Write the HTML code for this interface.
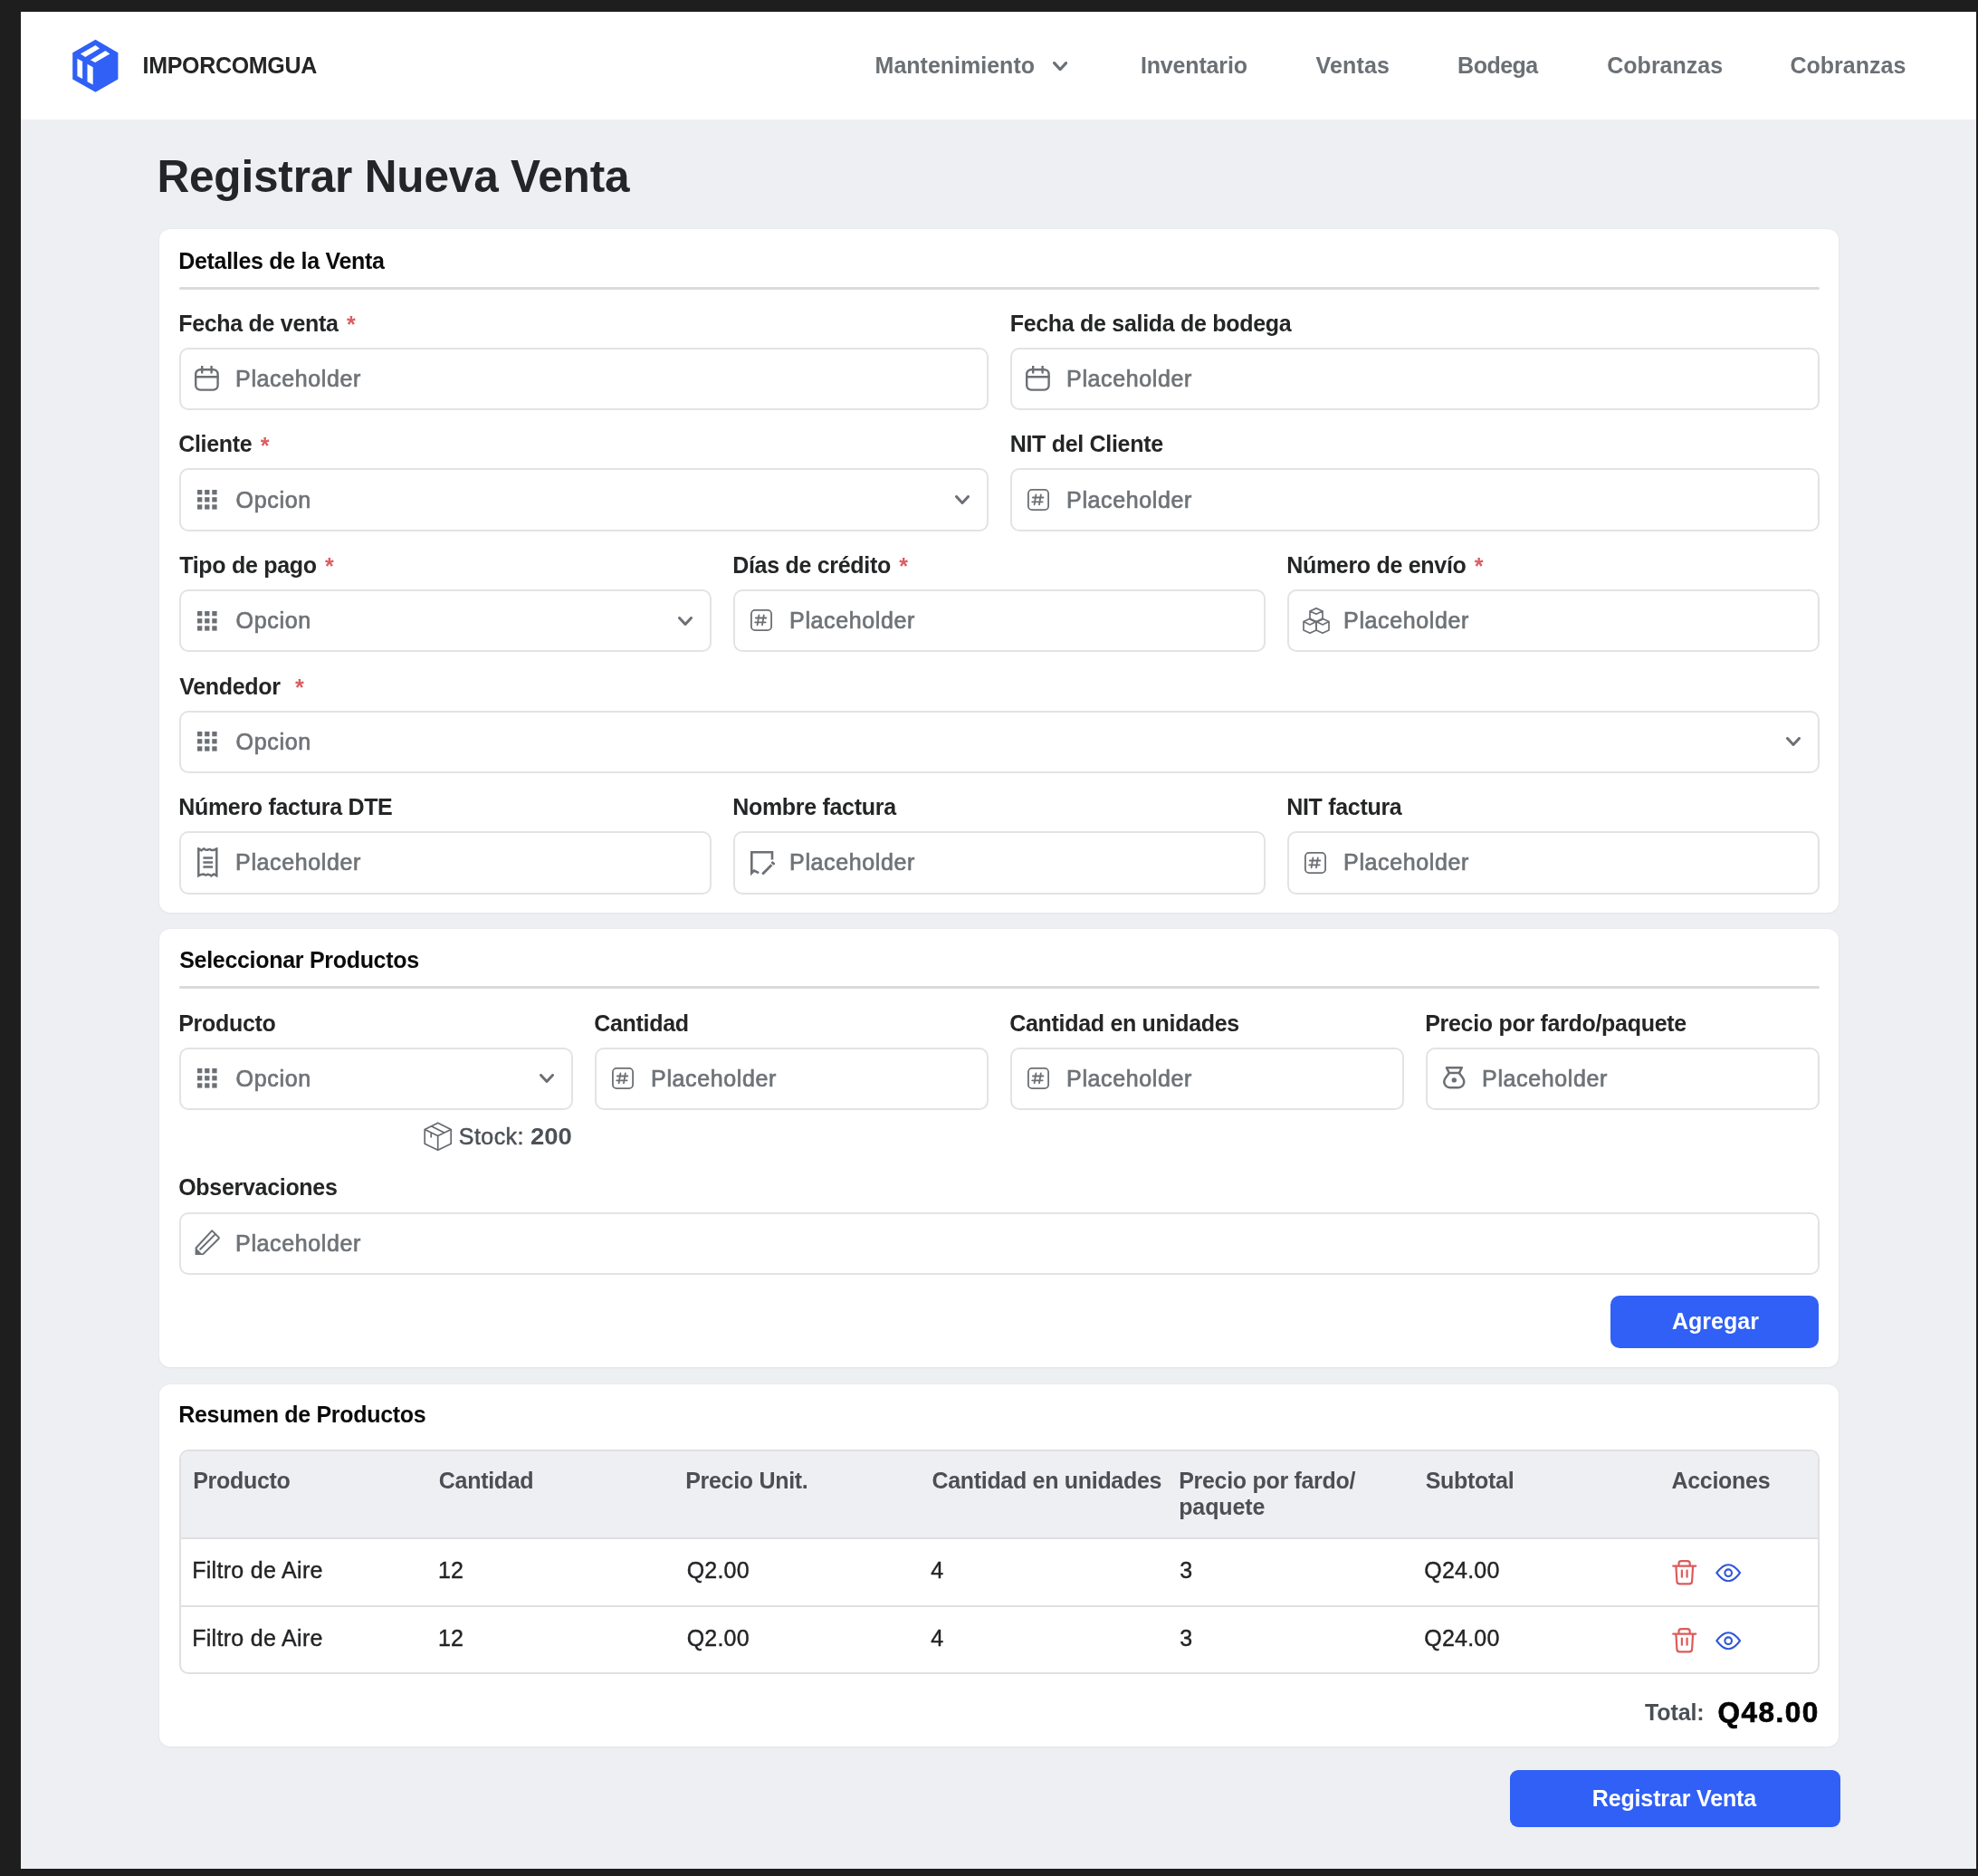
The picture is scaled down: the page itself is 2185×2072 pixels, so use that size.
<!DOCTYPE html>
<html><head><meta charset="utf-8"><title>Registrar Nueva Venta</title>
<style>html,body{margin:0;padding:0;} body{width:2185px;height:2072px;background:#1e1e1f;position:relative;overflow:hidden;font-family:'Liberation Sans', sans-serif;}</style>
</head><body><div style="position:absolute;left:0;top:0;width:2185px;height:2072px;will-change:transform">
<div style="position:absolute;left:23px;top:13px;width:2160px;height:2051px;background:#eeeff2"></div>
<div style="position:absolute;left:23px;top:13px;width:2160px;height:119px;background:#fff"></div>
<svg style="position:absolute;left:79px;top:43px" width="52" height="60" viewBox="0 0 52 60" fill="none"><path fill="#3060f5" d="M26.5 0.8 L51.4 15.3 L51.4 44.5 L26.5 58.8 L1.2 44.5 L1.2 15.3 Z"/>
<path fill="#fff" d="M9.9 16.6 L26.5 7.0 L31.0 10.5 L15.2 19.9 Z"/>
<path fill="#fff" d="M20.9 23.2 L37.4 13.1 L42.4 16.4 L26.1 26.1 Z"/>
<path fill="#fff" d="M6.4 21.8 L12.1 24.7 L12.1 44.1 L6.4 41.0 Z"/>
<path fill="#fff" d="M17.5 27.8 L23.7 31.3 L23.7 50.5 L17.5 47.2 Z"/></svg>
<div style="position:absolute;left:157.50px;top:59.74px;font:700 25px/25px 'Liberation Sans', sans-serif;color:#242526;white-space:nowrap;letter-spacing:-0.3px;">IMPORCOMGUA</div>
<div style="position:absolute;left:966.60px;top:59.84px;font:700 25px/25px 'Liberation Sans', sans-serif;color:#6b7075;white-space:nowrap;">Mantenimiento</div>
<svg style="position:absolute;left:1163.2px;top:67.8px" width="16.2" height="10.4" viewBox="0 0 16.2 10.4" fill="none"><path d="M1.6 1.6 L8.1 8.8 L14.6 1.6" stroke="#6b7075" stroke-width="3.2" stroke-linecap="round" stroke-linejoin="round"/></svg>
<div style="position:absolute;left:1259.90px;top:59.84px;font:700 25px/25px 'Liberation Sans', sans-serif;color:#6b7075;white-space:nowrap;letter-spacing:-0.15px;">Inventario</div>
<div style="position:absolute;left:1453.50px;top:59.84px;font:700 25px/25px 'Liberation Sans', sans-serif;color:#6b7075;white-space:nowrap;letter-spacing:0.15px;">Ventas</div>
<div style="position:absolute;left:1610.10px;top:59.84px;font:700 25px/25px 'Liberation Sans', sans-serif;color:#6b7075;white-space:nowrap;letter-spacing:-0.5px;">Bodega</div>
<div style="position:absolute;left:1775.30px;top:59.84px;font:700 25px/25px 'Liberation Sans', sans-serif;color:#6b7075;white-space:nowrap;">Cobranzas</div>
<div style="position:absolute;left:1977.50px;top:59.84px;font:700 25px/25px 'Liberation Sans', sans-serif;color:#6b7075;white-space:nowrap;">Cobranzas</div>
<div style="position:absolute;left:173.40px;top:169.90px;font:700 49.5px/49.5px 'Liberation Sans', sans-serif;color:#242526;white-space:nowrap;letter-spacing:-0.17px;">Registrar Nueva Venta</div>
<div style="position:absolute;left:176px;top:253.3px;width:1854.5px;height:754.5px;background:#fff;border-radius:12px;box-shadow:0 0 2px rgba(0,0,0,0.05),0 1px 3px rgba(0,0,0,0.04)"></div>
<div style="position:absolute;left:197.20px;top:275.94px;font:700 25px/25px 'Liberation Sans', sans-serif;color:#0b0b0b;white-space:nowrap;letter-spacing:-0.3px;">Detalles de la Venta</div>
<div style="position:absolute;left:197.5px;top:316.6px;width:1812px;height:3px;background:#dadadd;border-radius:1.5px"></div>
<div style="position:absolute;left:197.20px;top:344.74px;font:700 25px/25px 'Liberation Sans', sans-serif;color:#242526;white-space:nowrap;letter-spacing:-0.3px;">Fecha de venta<span style="color:#dc5d62;position:relative;top:1.5px;margin-left:9.3px">*</span></div>
<div style="position:absolute;left:1115.70px;top:344.74px;font:700 25px/25px 'Liberation Sans', sans-serif;color:#242526;white-space:nowrap;letter-spacing:-0.3px;">Fecha de salida de bodega</div>
<div style="position:absolute;left:197.5px;top:383.7px;width:894.0px;height:69.6px;box-sizing:border-box;border:2px solid #e3e3e6;border-radius:10px;background:#fff"></div>
<svg style="position:absolute;left:215.1px;top:403.7px" width="27" height="28" viewBox="0 0 27 28" fill="none"><rect x="1.2" y="4.2" width="24.4" height="22.4" rx="5" stroke="#6c7075" stroke-width="2.4"/>
<path d="M1.2 12.2 H25.6 M8.2 0.6 V7.6 M18.6 0.6 V7.6" stroke="#6c7075" stroke-width="2.4" stroke-linecap="round"/></svg>
<div style="position:absolute;left:260.10px;top:405.94px;font:400 25px/25px 'Liberation Sans', sans-serif;color:#6f7377;white-space:nowrap;letter-spacing:0.62px;-webkit-text-stroke:0.7px #6f7377;">Placeholder</div>
<div style="position:absolute;left:1115.5px;top:383.7px;width:894.0px;height:69.6px;box-sizing:border-box;border:2px solid #e3e3e6;border-radius:10px;background:#fff"></div>
<svg style="position:absolute;left:1133.1px;top:403.7px" width="27" height="28" viewBox="0 0 27 28" fill="none"><rect x="1.2" y="4.2" width="24.4" height="22.4" rx="5" stroke="#6c7075" stroke-width="2.4"/>
<path d="M1.2 12.2 H25.6 M8.2 0.6 V7.6 M18.6 0.6 V7.6" stroke="#6c7075" stroke-width="2.4" stroke-linecap="round"/></svg>
<div style="position:absolute;left:1178.10px;top:405.94px;font:400 25px/25px 'Liberation Sans', sans-serif;color:#6f7377;white-space:nowrap;letter-spacing:0.62px;-webkit-text-stroke:0.7px #6f7377;">Placeholder</div>
<div style="position:absolute;left:197.20px;top:478.34px;font:700 25px/25px 'Liberation Sans', sans-serif;color:#242526;white-space:nowrap;letter-spacing:-0.3px;">Cliente<span style="color:#dc5d62;position:relative;top:1.5px;margin-left:9.3px">*</span></div>
<div style="position:absolute;left:1115.70px;top:478.34px;font:700 25px/25px 'Liberation Sans', sans-serif;color:#242526;white-space:nowrap;letter-spacing:-0.3px;">NIT del Cliente</div>
<div style="position:absolute;left:197.5px;top:517.3px;width:894.0px;height:69.6px;box-sizing:border-box;border:2px solid #e3e3e6;border-radius:10px;background:#fff"></div>
<svg style="position:absolute;left:218.1px;top:541.0999999999999px" width="22" height="22" viewBox="0 0 22 22" fill="none"><rect x="0.0" y="0.0" width="5.3" height="5.3" fill="#6c7075"/><rect x="0.0" y="8.15" width="5.3" height="5.3" fill="#6c7075"/><rect x="0.0" y="16.3" width="5.3" height="5.3" fill="#6c7075"/><rect x="8.15" y="0.0" width="5.3" height="5.3" fill="#6c7075"/><rect x="8.15" y="8.15" width="5.3" height="5.3" fill="#6c7075"/><rect x="8.15" y="16.3" width="5.3" height="5.3" fill="#6c7075"/><rect x="16.3" y="0.0" width="5.3" height="5.3" fill="#6c7075"/><rect x="16.3" y="8.15" width="5.3" height="5.3" fill="#6c7075"/><rect x="16.3" y="16.3" width="5.3" height="5.3" fill="#6c7075"/></svg>
<div style="position:absolute;left:260.50px;top:539.54px;font:400 25px/25px 'Liberation Sans', sans-serif;color:#6f7377;white-space:nowrap;letter-spacing:0.7px;-webkit-text-stroke:0.7px #6f7377;">Opcion</div>
<svg style="position:absolute;left:1054.6px;top:547.0999999999999px" width="16" height="10" viewBox="0 0 16 10" fill="none"><path d="M1.5 1.5 L8.0 8.5 L14.5 1.5" stroke="#6c7075" stroke-width="3" stroke-linecap="round" stroke-linejoin="round"/></svg>
<div style="position:absolute;left:1115.5px;top:517.3px;width:894.0px;height:69.6px;box-sizing:border-box;border:2px solid #e3e3e6;border-radius:10px;background:#fff"></div>
<svg style="position:absolute;left:1135.2px;top:539.8px" width="24" height="24" viewBox="0 0 24 24" fill="none"><rect x="0.9" y="0.9" width="22.2" height="22.2" rx="4.2" stroke="#6c7075" stroke-width="1.8"/>
<path d="M9.4 6.4 L7.6 17.4 M14.8 6.4 L13 17.4 M5.9 9.5 H17.4 M5.2 14.3 H16.7" stroke="#6c7075" stroke-width="1.8" stroke-linecap="round"/></svg>
<div style="position:absolute;left:1178.10px;top:539.54px;font:400 25px/25px 'Liberation Sans', sans-serif;color:#6f7377;white-space:nowrap;letter-spacing:0.62px;-webkit-text-stroke:0.7px #6f7377;">Placeholder</div>
<div style="position:absolute;left:198.20px;top:611.94px;font:700 25px/25px 'Liberation Sans', sans-serif;color:#242526;white-space:nowrap;letter-spacing:-0.3px;">Tipo de pago<span style="color:#dc5d62;position:relative;top:1.5px;margin-left:9.3px">*</span></div>
<div style="position:absolute;left:809.20px;top:611.94px;font:700 25px/25px 'Liberation Sans', sans-serif;color:#242526;white-space:nowrap;letter-spacing:-0.3px;">Días de crédito<span style="color:#dc5d62;position:relative;top:1.5px;margin-left:9.3px">*</span></div>
<div style="position:absolute;left:1421.20px;top:611.94px;font:700 25px/25px 'Liberation Sans', sans-serif;color:#242526;white-space:nowrap;letter-spacing:-0.3px;">Número de envío<span style="color:#dc5d62;position:relative;top:1.5px;margin-left:9.3px">*</span></div>
<div style="position:absolute;left:197.5px;top:650.9px;width:588.0px;height:69.6px;box-sizing:border-box;border:2px solid #e3e3e6;border-radius:10px;background:#fff"></div>
<svg style="position:absolute;left:218.1px;top:674.6999999999999px" width="22" height="22" viewBox="0 0 22 22" fill="none"><rect x="0.0" y="0.0" width="5.3" height="5.3" fill="#6c7075"/><rect x="0.0" y="8.15" width="5.3" height="5.3" fill="#6c7075"/><rect x="0.0" y="16.3" width="5.3" height="5.3" fill="#6c7075"/><rect x="8.15" y="0.0" width="5.3" height="5.3" fill="#6c7075"/><rect x="8.15" y="8.15" width="5.3" height="5.3" fill="#6c7075"/><rect x="8.15" y="16.3" width="5.3" height="5.3" fill="#6c7075"/><rect x="16.3" y="0.0" width="5.3" height="5.3" fill="#6c7075"/><rect x="16.3" y="8.15" width="5.3" height="5.3" fill="#6c7075"/><rect x="16.3" y="16.3" width="5.3" height="5.3" fill="#6c7075"/></svg>
<div style="position:absolute;left:260.50px;top:673.14px;font:400 25px/25px 'Liberation Sans', sans-serif;color:#6f7377;white-space:nowrap;letter-spacing:0.7px;-webkit-text-stroke:0.7px #6f7377;">Opcion</div>
<svg style="position:absolute;left:748.6px;top:680.6999999999999px" width="16" height="10" viewBox="0 0 16 10" fill="none"><path d="M1.5 1.5 L8.0 8.5 L14.5 1.5" stroke="#6c7075" stroke-width="3" stroke-linecap="round" stroke-linejoin="round"/></svg>
<div style="position:absolute;left:809.5px;top:650.9px;width:588.0px;height:69.6px;box-sizing:border-box;border:2px solid #e3e3e6;border-radius:10px;background:#fff"></div>
<svg style="position:absolute;left:829.2px;top:673.4px" width="24" height="24" viewBox="0 0 24 24" fill="none"><rect x="0.9" y="0.9" width="22.2" height="22.2" rx="4.2" stroke="#6c7075" stroke-width="1.8"/>
<path d="M9.4 6.4 L7.6 17.4 M14.8 6.4 L13 17.4 M5.9 9.5 H17.4 M5.2 14.3 H16.7" stroke="#6c7075" stroke-width="1.8" stroke-linecap="round"/></svg>
<div style="position:absolute;left:872.10px;top:673.14px;font:400 25px/25px 'Liberation Sans', sans-serif;color:#6f7377;white-space:nowrap;letter-spacing:0.62px;-webkit-text-stroke:0.7px #6f7377;">Placeholder</div>
<div style="position:absolute;left:1421.5px;top:650.9px;width:588.0px;height:69.6px;box-sizing:border-box;border:2px solid #e3e3e6;border-radius:10px;background:#fff"></div>
<svg style="position:absolute;left:1438.6px;top:671.0px" width="30" height="29" viewBox="0 0 30 29" fill="none"><path d="M15 0.9 L22 4 V13 L15 16.3 L8 13 V4 Z M8 4 L15 7.3 L22 4" stroke="#6c7075" stroke-width="1.7" stroke-linejoin="round"/>
<path d="M8 12.2 L15 15.6 V24.9 L8 28.2 L1 24.9 V15.6 Z M1 15.6 L8 19 L15 15.6" stroke="#6c7075" stroke-width="1.7" stroke-linejoin="round"/>
<path d="M22 12.2 L29 15.6 V24.9 L22 28.2 L15 24.9 V15.6 Z M15 15.6 L22 19 L29 15.6" stroke="#6c7075" stroke-width="1.7" stroke-linejoin="round"/></svg>
<div style="position:absolute;left:1484.10px;top:673.14px;font:400 25px/25px 'Liberation Sans', sans-serif;color:#6f7377;white-space:nowrap;letter-spacing:0.62px;-webkit-text-stroke:0.7px #6f7377;">Placeholder</div>
<div style="position:absolute;left:198.20px;top:745.54px;font:700 25px/25px 'Liberation Sans', sans-serif;color:#242526;white-space:nowrap;letter-spacing:-0.3px;">Vendedor<span style="color:#dc5d62;position:relative;top:1.5px;margin-left:16.3px">*</span></div>
<div style="position:absolute;left:197.5px;top:784.5px;width:1812px;height:69.6px;box-sizing:border-box;border:2px solid #e3e3e6;border-radius:10px;background:#fff"></div>
<svg style="position:absolute;left:218.1px;top:808.3px" width="22" height="22" viewBox="0 0 22 22" fill="none"><rect x="0.0" y="0.0" width="5.3" height="5.3" fill="#6c7075"/><rect x="0.0" y="8.15" width="5.3" height="5.3" fill="#6c7075"/><rect x="0.0" y="16.3" width="5.3" height="5.3" fill="#6c7075"/><rect x="8.15" y="0.0" width="5.3" height="5.3" fill="#6c7075"/><rect x="8.15" y="8.15" width="5.3" height="5.3" fill="#6c7075"/><rect x="8.15" y="16.3" width="5.3" height="5.3" fill="#6c7075"/><rect x="16.3" y="0.0" width="5.3" height="5.3" fill="#6c7075"/><rect x="16.3" y="8.15" width="5.3" height="5.3" fill="#6c7075"/><rect x="16.3" y="16.3" width="5.3" height="5.3" fill="#6c7075"/></svg>
<div style="position:absolute;left:260.50px;top:806.74px;font:400 25px/25px 'Liberation Sans', sans-serif;color:#6f7377;white-space:nowrap;letter-spacing:0.7px;-webkit-text-stroke:0.7px #6f7377;">Opcion</div>
<svg style="position:absolute;left:1972.6px;top:814.3px" width="16" height="10" viewBox="0 0 16 10" fill="none"><path d="M1.5 1.5 L8.0 8.5 L14.5 1.5" stroke="#6c7075" stroke-width="3" stroke-linecap="round" stroke-linejoin="round"/></svg>
<div style="position:absolute;left:197.20px;top:879.14px;font:700 25px/25px 'Liberation Sans', sans-serif;color:#242526;white-space:nowrap;letter-spacing:-0.3px;">Número factura DTE</div>
<div style="position:absolute;left:809.20px;top:879.14px;font:700 25px/25px 'Liberation Sans', sans-serif;color:#242526;white-space:nowrap;letter-spacing:-0.3px;">Nombre factura</div>
<div style="position:absolute;left:1421.20px;top:879.14px;font:700 25px/25px 'Liberation Sans', sans-serif;color:#242526;white-space:nowrap;letter-spacing:-0.3px;">NIT factura</div>
<div style="position:absolute;left:197.5px;top:918.0999999999999px;width:588.0px;height:69.6px;box-sizing:border-box;border:2px solid #e3e3e6;border-radius:10px;background:#fff"></div>
<svg style="position:absolute;left:217.6px;top:936.1999999999999px" width="23" height="33" viewBox="0 0 23 33" fill="none"><path d="M1.3 1.3 L4.5 3.2 Q7.3 1.3 7.3 1.3 Q9.3 3.2 11.3 2.8 Q13.3 1.3 15.3 2.8 Q17.3 3.6 21.3 1.3 V31.2 L18.3 29.5 Q15.3 31.4 15.3 31.4 Q13.3 29.6 11.3 29.8 Q9.3 31.4 7.3 29.6 Q4.3 29.6 1.3 31.2 Z" stroke="#6c7075" stroke-width="2.5" stroke-linejoin="miter"/>
<path d="M6.4 11.6 H17 M6.4 16.6 H17 M6.4 21.4 H17" stroke="#6c7075" stroke-width="2.5"/></svg>
<div style="position:absolute;left:260.10px;top:940.34px;font:400 25px/25px 'Liberation Sans', sans-serif;color:#6f7377;white-space:nowrap;letter-spacing:0.62px;-webkit-text-stroke:0.7px #6f7377;">Placeholder</div>
<div style="position:absolute;left:809.5px;top:918.0999999999999px;width:588.0px;height:69.6px;box-sizing:border-box;border:2px solid #e3e3e6;border-radius:10px;background:#fff"></div>
<svg style="position:absolute;left:828.8px;top:940.1999999999999px" width="27" height="27" viewBox="0 0 27 27" fill="none"><path d="M24 9.6 V1.3 H1.3 V24.2 L4 21.5 L9.2 24.2" stroke="#6c7075" stroke-width="2.6" stroke-linejoin="miter"/>
<path d="M13.2 25.6 L23.4 15.3" stroke="#6c7075" stroke-width="2.8"/>
<path d="M24.3 12.7 L25.6 14" stroke="#6c7075" stroke-width="2.8" stroke-linecap="round"/></svg>
<div style="position:absolute;left:872.10px;top:940.34px;font:400 25px/25px 'Liberation Sans', sans-serif;color:#6f7377;white-space:nowrap;letter-spacing:0.62px;-webkit-text-stroke:0.7px #6f7377;">Placeholder</div>
<div style="position:absolute;left:1421.5px;top:918.0999999999999px;width:588.0px;height:69.6px;box-sizing:border-box;border:2px solid #e3e3e6;border-radius:10px;background:#fff"></div>
<svg style="position:absolute;left:1441.2px;top:940.5999999999999px" width="24" height="24" viewBox="0 0 24 24" fill="none"><rect x="0.9" y="0.9" width="22.2" height="22.2" rx="4.2" stroke="#6c7075" stroke-width="1.8"/>
<path d="M9.4 6.4 L7.6 17.4 M14.8 6.4 L13 17.4 M5.9 9.5 H17.4 M5.2 14.3 H16.7" stroke="#6c7075" stroke-width="1.8" stroke-linecap="round"/></svg>
<div style="position:absolute;left:1484.10px;top:940.34px;font:400 25px/25px 'Liberation Sans', sans-serif;color:#6f7377;white-space:nowrap;letter-spacing:0.62px;-webkit-text-stroke:0.7px #6f7377;">Placeholder</div>
<div style="position:absolute;left:176px;top:1025.7px;width:1854.5px;height:484.5px;background:#fff;border-radius:12px;box-shadow:0 0 2px rgba(0,0,0,0.05),0 1px 3px rgba(0,0,0,0.04)"></div>
<div style="position:absolute;left:198.20px;top:1048.24px;font:700 25px/25px 'Liberation Sans', sans-serif;color:#0b0b0b;white-space:nowrap;letter-spacing:-0.3px;">Seleccionar Productos</div>
<div style="position:absolute;left:197.5px;top:1089.1px;width:1812px;height:3px;background:#dadadd;border-radius:1.5px"></div>
<div style="position:absolute;left:197.20px;top:1117.64px;font:700 25px/25px 'Liberation Sans', sans-serif;color:#242526;white-space:nowrap;letter-spacing:-0.3px;">Producto</div>
<div style="position:absolute;left:656.20px;top:1117.64px;font:700 25px/25px 'Liberation Sans', sans-serif;color:#242526;white-space:nowrap;letter-spacing:-0.3px;">Cantidad</div>
<div style="position:absolute;left:1115.20px;top:1117.64px;font:700 25px/25px 'Liberation Sans', sans-serif;color:#242526;white-space:nowrap;letter-spacing:-0.3px;">Cantidad en unidades</div>
<div style="position:absolute;left:1574.20px;top:1117.64px;font:700 25px/25px 'Liberation Sans', sans-serif;color:#242526;white-space:nowrap;letter-spacing:-0.3px;">Precio por fardo/paquete</div>
<div style="position:absolute;left:197.5px;top:1156.5px;width:435.0px;height:69.6px;box-sizing:border-box;border:2px solid #e3e3e6;border-radius:10px;background:#fff"></div>
<svg style="position:absolute;left:218.1px;top:1180.3px" width="22" height="22" viewBox="0 0 22 22" fill="none"><rect x="0.0" y="0.0" width="5.3" height="5.3" fill="#6c7075"/><rect x="0.0" y="8.15" width="5.3" height="5.3" fill="#6c7075"/><rect x="0.0" y="16.3" width="5.3" height="5.3" fill="#6c7075"/><rect x="8.15" y="0.0" width="5.3" height="5.3" fill="#6c7075"/><rect x="8.15" y="8.15" width="5.3" height="5.3" fill="#6c7075"/><rect x="8.15" y="16.3" width="5.3" height="5.3" fill="#6c7075"/><rect x="16.3" y="0.0" width="5.3" height="5.3" fill="#6c7075"/><rect x="16.3" y="8.15" width="5.3" height="5.3" fill="#6c7075"/><rect x="16.3" y="16.3" width="5.3" height="5.3" fill="#6c7075"/></svg>
<div style="position:absolute;left:260.50px;top:1178.74px;font:400 25px/25px 'Liberation Sans', sans-serif;color:#6f7377;white-space:nowrap;letter-spacing:0.7px;-webkit-text-stroke:0.7px #6f7377;">Opcion</div>
<svg style="position:absolute;left:595.6px;top:1186.3px" width="16" height="10" viewBox="0 0 16 10" fill="none"><path d="M1.5 1.5 L8.0 8.5 L14.5 1.5" stroke="#6c7075" stroke-width="3" stroke-linecap="round" stroke-linejoin="round"/></svg>
<div style="position:absolute;left:656.5px;top:1156.5px;width:435.0px;height:69.6px;box-sizing:border-box;border:2px solid #e3e3e6;border-radius:10px;background:#fff"></div>
<svg style="position:absolute;left:676.2px;top:1179.0px" width="24" height="24" viewBox="0 0 24 24" fill="none"><rect x="0.9" y="0.9" width="22.2" height="22.2" rx="4.2" stroke="#6c7075" stroke-width="1.8"/>
<path d="M9.4 6.4 L7.6 17.4 M14.8 6.4 L13 17.4 M5.9 9.5 H17.4 M5.2 14.3 H16.7" stroke="#6c7075" stroke-width="1.8" stroke-linecap="round"/></svg>
<div style="position:absolute;left:719.10px;top:1178.74px;font:400 25px/25px 'Liberation Sans', sans-serif;color:#6f7377;white-space:nowrap;letter-spacing:0.62px;-webkit-text-stroke:0.7px #6f7377;">Placeholder</div>
<div style="position:absolute;left:1115.5px;top:1156.5px;width:435.0px;height:69.6px;box-sizing:border-box;border:2px solid #e3e3e6;border-radius:10px;background:#fff"></div>
<svg style="position:absolute;left:1135.2px;top:1179.0px" width="24" height="24" viewBox="0 0 24 24" fill="none"><rect x="0.9" y="0.9" width="22.2" height="22.2" rx="4.2" stroke="#6c7075" stroke-width="1.8"/>
<path d="M9.4 6.4 L7.6 17.4 M14.8 6.4 L13 17.4 M5.9 9.5 H17.4 M5.2 14.3 H16.7" stroke="#6c7075" stroke-width="1.8" stroke-linecap="round"/></svg>
<div style="position:absolute;left:1178.10px;top:1178.74px;font:400 25px/25px 'Liberation Sans', sans-serif;color:#6f7377;white-space:nowrap;letter-spacing:0.62px;-webkit-text-stroke:0.7px #6f7377;">Placeholder</div>
<div style="position:absolute;left:1574.5px;top:1156.5px;width:435.0px;height:69.6px;box-sizing:border-box;border:2px solid #e3e3e6;border-radius:10px;background:#fff"></div>
<svg style="position:absolute;left:1593.8px;top:1178.4px" width="25" height="25" viewBox="0 0 25 25" fill="none"><path d="M3.9 1.3 H20.8 L17.8 7.1 H6.9 Z" stroke="#6c7075" stroke-width="2.5" stroke-linejoin="round"/>
<path d="M6.9 7.1 L2.8 12.4 C-0.5 16.8 2 23 7.7 23.2 H17 C22.6 23 25 16.8 21.8 12.4 L17.8 7.1" stroke="#6c7075" stroke-width="2.5" stroke-linejoin="round"/>
<circle cx="12.3" cy="14.9" r="2.7" fill="#6c7075"/></svg>
<div style="position:absolute;left:1637.10px;top:1178.74px;font:400 25px/25px 'Liberation Sans', sans-serif;color:#6f7377;white-space:nowrap;letter-spacing:0.62px;-webkit-text-stroke:0.7px #6f7377;">Placeholder</div>
<svg style="position:absolute;left:468.2px;top:1239.1px" width="31.5" height="32.5" viewBox="0 0 31.5 32.5" fill="none"><path d="M15.7 1.2 L30.2 8.5 V24.2 L15.7 31.2 L1.2 24.2 V8.5 Z" stroke="#666a6f" stroke-width="1.7" stroke-linejoin="round"/>
<path d="M1.2 8.5 L15.7 15.5 L30.2 8.5 M15.7 15.5 V31.2 M8.2 4.8 L22.8 12 M8.2 12 V17.4" stroke="#666a6f" stroke-width="1.7" stroke-linejoin="round"/></svg>
<div style="position:absolute;left:506.80px;top:1242.54px;font:400 25px/25px 'Liberation Sans', sans-serif;color:#4d5157;white-space:nowrap;letter-spacing:0.45px;-webkit-text-stroke:0.5px #4d5157;">Stock:</div>
<div style="position:absolute;left:585.60px;top:1242.54px;font:700 25px/25px 'Liberation Sans', sans-serif;color:#4d5157;white-space:nowrap;transform:scaleX(1.1);transform-origin:0 0;">200</div>
<div style="position:absolute;left:197.20px;top:1298.64px;font:700 25px/25px 'Liberation Sans', sans-serif;color:#242526;white-space:nowrap;letter-spacing:-0.3px;">Observaciones</div>
<div style="position:absolute;left:197.5px;top:1338.5px;width:1812px;height:69.6px;box-sizing:border-box;border:2px solid #e3e3e6;border-radius:10px;background:#fff"></div>
<svg style="position:absolute;left:215.4px;top:1357.5px" width="28.5" height="28.5" viewBox="0 0 28.5 28.5" fill="none"><path d="M19.6 1.6 L26.6 8.6 Q27.2 9.4 26.4 10.2 L9 27.4 L1.6 27.4 V20.2 L18.8 1.6 Q19.2 1.2 19.6 1.6 Z" stroke="#6c7075" stroke-width="2" stroke-linejoin="round"/>
<path d="M22.6 5.4 L6.2 21.8" stroke="#6c7075" stroke-width="2" stroke-linecap="round"/>
<path d="M1.6 20.6 L8.6 27.4 H1.6 Z" fill="#6c7075"/></svg>
<div style="position:absolute;left:260.10px;top:1360.74px;font:400 25px/25px 'Liberation Sans', sans-serif;color:#6f7377;white-space:nowrap;letter-spacing:0.62px;-webkit-text-stroke:0.7px #6f7377;">Placeholder</div>
<div style="position:absolute;left:1778.9px;top:1431px;width:230.6px;height:57.8px;background:#3060f5;border-radius:10px"></div>
<div style="position:absolute;left:1847.00px;top:1447.34px;font:700 25px/25px 'Liberation Sans', sans-serif;color:#fff;white-space:nowrap;">Agregar</div>
<div style="position:absolute;left:176px;top:1529.2px;width:1854.5px;height:399.79999999999995px;background:#fff;border-radius:12px;box-shadow:0 0 2px rgba(0,0,0,0.05),0 1px 3px rgba(0,0,0,0.04)"></div>
<div style="position:absolute;left:197.20px;top:1550.04px;font:700 25px/25px 'Liberation Sans', sans-serif;color:#0b0b0b;white-space:nowrap;letter-spacing:-0.3px;">Resumen de Productos</div>
<div style="position:absolute;left:197.5px;top:1600.8px;width:1812px;height:247.9000000000001px;box-sizing:border-box;border:2px solid #e0e0e3;border-radius:10px;background:#fff;overflow:hidden"></div>
<div style="position:absolute;left:199.5px;top:1602.8px;width:1808px;height:94.90000000000009px;background:#eeeff2;border-radius:8px 8px 0 0"></div>
<div style="position:absolute;left:197.5px;top:1697.5px;width:1812px;height:2px;background:#e0e0e3"></div>
<div style="position:absolute;left:197.5px;top:1772.7px;width:1812px;height:2px;background:#e0e0e3"></div>
<div style="position:absolute;left:213.20px;top:1623.14px;font:700 25px/25px 'Liberation Sans', sans-serif;color:#4b4f55;white-space:nowrap;letter-spacing:-0.3px;">Producto</div>
<div style="position:absolute;left:484.80px;top:1623.14px;font:700 25px/25px 'Liberation Sans', sans-serif;color:#4b4f55;white-space:nowrap;letter-spacing:-0.3px;">Cantidad</div>
<div style="position:absolute;left:757.20px;top:1623.14px;font:700 25px/25px 'Liberation Sans', sans-serif;color:#4b4f55;white-space:nowrap;letter-spacing:-0.3px;">Precio Unit.</div>
<div style="position:absolute;left:1029.40px;top:1623.14px;font:700 25px/25px 'Liberation Sans', sans-serif;color:#4b4f55;white-space:nowrap;letter-spacing:-0.3px;">Cantidad en unidades</div>
<div style="position:absolute;left:1302.20px;top:1623.14px;font:700 25px/25px 'Liberation Sans', sans-serif;color:#4b4f55;white-space:nowrap;letter-spacing:-0.3px;">Precio por fardo/</div>
<div style="position:absolute;left:1574.70px;top:1623.14px;font:700 25px/25px 'Liberation Sans', sans-serif;color:#4b4f55;white-space:nowrap;letter-spacing:-0.3px;">Subtotal</div>
<div style="position:absolute;left:1846.50px;top:1623.14px;font:700 25px/25px 'Liberation Sans', sans-serif;color:#4b4f55;white-space:nowrap;letter-spacing:-0.3px;">Acciones</div>
<div style="position:absolute;left:1302.20px;top:1651.84px;font:700 25px/25px 'Liberation Sans', sans-serif;color:#4b4f55;white-space:nowrap;letter-spacing:-0.1px;">paquete</div>
<div style="position:absolute;left:212.20px;top:1722.24px;font:400 25px/25px 'Liberation Sans', sans-serif;color:#232426;white-space:nowrap;letter-spacing:0.3px;-webkit-text-stroke:0.4px #232426;">Filtro de Aire</div>
<div style="position:absolute;left:484.10px;top:1722.24px;font:400 25px/25px 'Liberation Sans', sans-serif;color:#232426;white-space:nowrap;-webkit-text-stroke:0.4px #232426;">12</div>
<div style="position:absolute;left:758.70px;top:1722.24px;font:400 25px/25px 'Liberation Sans', sans-serif;color:#232426;white-space:nowrap;letter-spacing:0.2px;-webkit-text-stroke:0.4px #232426;">Q2.00</div>
<div style="position:absolute;left:1028.20px;top:1722.24px;font:400 25px/25px 'Liberation Sans', sans-serif;color:#232426;white-space:nowrap;-webkit-text-stroke:0.4px #232426;">4</div>
<div style="position:absolute;left:1303.20px;top:1722.24px;font:400 25px/25px 'Liberation Sans', sans-serif;color:#232426;white-space:nowrap;-webkit-text-stroke:0.4px #232426;">3</div>
<div style="position:absolute;left:1573.30px;top:1722.24px;font:400 25px/25px 'Liberation Sans', sans-serif;color:#232426;white-space:nowrap;letter-spacing:0.2px;-webkit-text-stroke:0.4px #232426;">Q24.00</div>
<svg style="position:absolute;left:1847.2px;top:1723.1px" width="27.5" height="27.5" viewBox="0 0 27.5 27.5" fill="none"><path d="M1.2 6.6 H26.3" stroke="#dc5b5b" stroke-width="2.2" stroke-linecap="round"/>
<path d="M7.5 6.6 V3.8 Q7.5 1.2 10.1 1.2 H17.1 Q19.7 1.2 19.7 3.8 V6.6" stroke="#dc5b5b" stroke-width="2.2"/>
<path d="M4.4 6.6 L5.4 23.6 Q5.6 26.3 8.3 26.3 H19.2 Q21.9 26.3 22.1 23.6 L23.1 6.6" stroke="#dc5b5b" stroke-width="2.2" stroke-linejoin="round"/>
<path d="M10.9 11.5 V18.7 M16.6 11.5 V18.7" stroke="#dc5b5b" stroke-width="2.2" stroke-linecap="round"/></svg>
<svg style="position:absolute;left:1894.8px;top:1726.6999999999998px" width="28.5" height="20.5" viewBox="0 0 28.5 20.5" fill="none"><path d="M1.3 10.2 Q7.8 1.2 14.2 1.2 Q20.6 1.2 27.1 10.2 Q20.6 19.2 14.2 19.2 Q7.8 19.2 1.3 10.2 Z" stroke="#2f56d9" stroke-width="2.1" stroke-linejoin="round"/>
<circle cx="14.2" cy="10.2" r="3.8" stroke="#2f56d9" stroke-width="2.1"/></svg>
<div style="position:absolute;left:212.20px;top:1797.14px;font:400 25px/25px 'Liberation Sans', sans-serif;color:#232426;white-space:nowrap;letter-spacing:0.3px;-webkit-text-stroke:0.4px #232426;">Filtro de Aire</div>
<div style="position:absolute;left:484.10px;top:1797.14px;font:400 25px/25px 'Liberation Sans', sans-serif;color:#232426;white-space:nowrap;-webkit-text-stroke:0.4px #232426;">12</div>
<div style="position:absolute;left:758.70px;top:1797.14px;font:400 25px/25px 'Liberation Sans', sans-serif;color:#232426;white-space:nowrap;letter-spacing:0.2px;-webkit-text-stroke:0.4px #232426;">Q2.00</div>
<div style="position:absolute;left:1028.20px;top:1797.14px;font:400 25px/25px 'Liberation Sans', sans-serif;color:#232426;white-space:nowrap;-webkit-text-stroke:0.4px #232426;">4</div>
<div style="position:absolute;left:1303.20px;top:1797.14px;font:400 25px/25px 'Liberation Sans', sans-serif;color:#232426;white-space:nowrap;-webkit-text-stroke:0.4px #232426;">3</div>
<div style="position:absolute;left:1573.30px;top:1797.14px;font:400 25px/25px 'Liberation Sans', sans-serif;color:#232426;white-space:nowrap;letter-spacing:0.2px;-webkit-text-stroke:0.4px #232426;">Q24.00</div>
<svg style="position:absolute;left:1847.2px;top:1798px" width="27.5" height="27.5" viewBox="0 0 27.5 27.5" fill="none"><path d="M1.2 6.6 H26.3" stroke="#dc5b5b" stroke-width="2.2" stroke-linecap="round"/>
<path d="M7.5 6.6 V3.8 Q7.5 1.2 10.1 1.2 H17.1 Q19.7 1.2 19.7 3.8 V6.6" stroke="#dc5b5b" stroke-width="2.2"/>
<path d="M4.4 6.6 L5.4 23.6 Q5.6 26.3 8.3 26.3 H19.2 Q21.9 26.3 22.1 23.6 L23.1 6.6" stroke="#dc5b5b" stroke-width="2.2" stroke-linejoin="round"/>
<path d="M10.9 11.5 V18.7 M16.6 11.5 V18.7" stroke="#dc5b5b" stroke-width="2.2" stroke-linecap="round"/></svg>
<svg style="position:absolute;left:1894.8px;top:1801.6px" width="28.5" height="20.5" viewBox="0 0 28.5 20.5" fill="none"><path d="M1.3 10.2 Q7.8 1.2 14.2 1.2 Q20.6 1.2 27.1 10.2 Q20.6 19.2 14.2 19.2 Q7.8 19.2 1.3 10.2 Z" stroke="#2f56d9" stroke-width="2.1" stroke-linejoin="round"/>
<circle cx="14.2" cy="10.2" r="3.8" stroke="#2f56d9" stroke-width="2.1"/></svg>
<div style="position:absolute;left:1817.00px;top:1878.64px;font:700 25px/25px 'Liberation Sans', sans-serif;color:#4b4f55;white-space:nowrap;letter-spacing:-0.1px;">Total:</div>
<div style="position:absolute;left:1897.40px;top:1875.54px;font:700 31.5px/31.5px 'Liberation Sans', sans-serif;color:#050505;white-space:nowrap;letter-spacing:1.5px;-webkit-text-stroke:0.7px #050505;">Q48.00</div>
<div style="position:absolute;left:1667.8px;top:1954.6px;width:365.4px;height:63.9px;background:#3060f5;border-radius:9px"></div>
<div style="position:absolute;left:1758.80px;top:1973.84px;font:700 25px/25px 'Liberation Sans', sans-serif;color:#fff;white-space:nowrap;letter-spacing:-0.15px;">Registrar Venta</div>
</div></body></html>
